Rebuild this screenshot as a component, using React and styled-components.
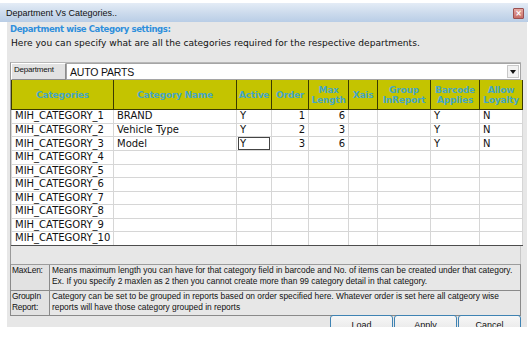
import React from 'react'
import styled, { createGlobalStyle } from 'styled-components'

const GlobalStyle = createGlobalStyle`
  html, body {
    margin: 0;
    padding: 0;
    background: #ffffff;
    overflow: hidden;
  }
  body {
    font-family: "Liberation Sans", Arial, sans-serif;
  }
`

const Window = styled.div`
  width: 528px;
  padding-top: 3px;
`

const TitleBar = styled.div`
  height: 19px;
  display: flex;
  align-items: center;
  justify-content: space-between;
  padding: 0 4px 0 6px;
  background: linear-gradient(to bottom, #e4ecf6 0%, #cbdaec 55%, #b9cde6 100%);
  font-size: 9px;
  color: #111;
`

const CloseBox = styled.div`
  width: 9px;
  height: 9px;
  margin-top: 1px;
  border: 1px solid #9a5050;
  border-radius: 1px;
  background: linear-gradient(to bottom, #e7a9a3, #c66d67);
  color: #fff;
  font-size: 8px;
  line-height: 9px;
  text-align: center;
  font-weight: bold;
  font-family: "DejaVu Sans", sans-serif;
`

const Body = styled.div`
  margin-left: 7px;
  width: 520px;
  box-sizing: border-box;
  padding: 1px 6px 0 3px;
  background: #e7e7e7;
  height: 305px;
  display: flex;
  flex-direction: column;
  & > * {
    flex-shrink: 0;
  }
`

const Heading = styled.div`
  font-family: "DejaVu Sans", Verdana, sans-serif;
  font-size: 8.5px;
  font-weight: bold;
  letter-spacing: -0.4px;
  line-height: 12px;
  color: #2f8fdc;
`

const Description = styled.div`
  font-family: "DejaVu Sans", Verdana, sans-serif;
  font-size: 9.1px;
  line-height: 12px;
  color: #111;
  margin-top: 2px;
  padding-left: 1px;
`

const GridFrame = styled.div`
  margin-top: 13px;
  height: 201px;
  border-left: 1px solid #9a9a9a;
  border-top: 1px solid #b8b8b8;
  display: flex;
  flex-direction: column;
`

const DeptRow = styled.div`
  display: flex;
  height: 17px;
`

const DeptLabel = styled.div`
  width: 55px;
  box-sizing: border-box;
  border: 1px solid #ffffff;
  border-right-color: #8c8c8c;
  border-bottom-color: #8c8c8c;
  background: #e2e2e2;
  font-size: 8px;
  letter-spacing: -0.2px;
  color: #111;
  padding: 1px 0 0 2px;
`

const Combo = styled.div`
  flex: 1;
  display: flex;
  align-items: center;
  justify-content: space-between;
  background: #fff;
  border: 1px solid #a5a5a5;
  padding-left: 3px;
  font-size: 10.5px;
  letter-spacing: -0.2px;
  color: #111;
`

const DropButton = styled.div`
  width: 10px;
  height: 11px;
  margin-right: 1px;
  display: flex;
  align-items: center;
  justify-content: center;
  background: #f2f2f2;
  border: 1px solid #c8c8c8;
`

const Table = styled.table`
  width: 511px;
  border-collapse: collapse;
  table-layout: fixed;
  font-family: "DejaVu Sans", Verdana, sans-serif;
  background: #fff;
`

const HeadCell = styled.th`
  height: 29px;
  padding: 0;
  background: #c4c400;
  border: 1px solid #3a3a00;
  border-top: none;
  color: #45a6c6;
  font-size: 9px;
  font-weight: bold;
  line-height: 10px;
  letter-spacing: -0.2px;
  text-align: center;
  white-space: nowrap;
`

const Cell = styled.td`
  height: 12.5px;
  padding: 0 3px;
  border: 1px solid #d6d6d6;
  border-top: none;
  font-size: 10px;
  line-height: 12px;
  color: #111;
  text-align: ${p => (p.$num ? 'right' : 'left')};
  white-space: nowrap;
  overflow: hidden;
  tr:last-child > & {
    border-bottom: 1px solid #4d4d4d;
  }
`

const EditBox = styled.div`
  margin: 0 -2px;
  padding: 0 1px;
  height: 11px;
  line-height: 11px;
  border: 1px solid #444;
  background: #fff;
`

const GridBlank = styled.div`
  flex: 1;
  border-right: 1px solid #c8c8c8;
`

const Notes = styled.div`
  display: grid;
  grid-template-columns: 39px 1fr;
  border: 1px solid #8a8a8a;
  border-top-color: #9c9c9c;
  font-size: 8.4px;
  line-height: 10.5px;
  color: #111;
`

const NoteLabel = styled.div`
  box-sizing: border-box;
  height: ${p => p.$h}px;
  padding: 0 0 0 1px;
  background: #e2e2e2;
  border-right: 1px solid #8a8a8a;
  border-bottom: ${p => (p.$last ? 'none' : '1px solid #8a8a8a')};
  letter-spacing: -0.2px;
`

const NoteText = styled.div`
  box-sizing: border-box;
  height: ${p => p.$h}px;
  padding: 0 0 0 2px;
  border-bottom: ${p => (p.$last ? 'none' : '1px solid #8a8a8a')};
  white-space: nowrap;
  overflow: hidden;
`

const ButtonRow = styled.div`
  display: flex;
  justify-content: flex-end;
  gap: 1px;
  margin-top: -1px;
`

const Button = styled.button`
  width: 63px;
  height: 24px;
  box-sizing: border-box;
  display: flex;
  align-items: center;
  justify-content: center;
  border: 1px solid #3f83b3;
  border-radius: 3px;
  background: linear-gradient(to bottom, #f7f7f7 0%, #ececec 50%, #dcdcdc 51%, #d2d2d2 100%);
  font-family: "Liberation Sans", Arial, sans-serif;
  font-size: 9px;
  line-height: 10px;
  color: #111;
  padding: 0 0 4px 0;
  u {
    text-decoration: underline;
  }
`

const columns = [
  { w: 102, label: 'Categories' },
  { w: 123, label: 'Category Name' },
  { w: 35, label: 'Active' },
  { w: 37, label: 'Order' },
  { w: 40, label: ['Max', 'Length'] },
  { w: 29, label: 'Xais' },
  { w: 53, label: ['Group', 'InReport'] },
  { w: 49, label: ['Barcode', 'Applies'] },
  { w: 43, label: ['Allow', 'Loyalty'] },
]

const data = [
  ['BRAND', 'Y', '1', '6', 'Y', 'N'],
  ['Vehicle Type', 'Y', '2', '3', 'Y', 'N'],
  ['Model', 'Y', '3', '6', 'Y', 'N'],
]

function Row({ index }) {
  const d = data[index - 1] || ['', '', '', '', '', '']
  return (
    <tr>
      <Cell>MIH_CATEGORY_{index}</Cell>
      <Cell>{d[0]}</Cell>
      <Cell>{index === 3 ? <EditBox>{d[1]}</EditBox> : d[1]}</Cell>
      <Cell $num>{d[2]}</Cell>
      <Cell $num>{d[3]}</Cell>
      <Cell />
      <Cell />
      <Cell>{d[4]}</Cell>
      <Cell>{d[5]}</Cell>
    </tr>
  )
}

function ButtonLabel({ text }) {
  return (
    <span>
      <u>{text[0]}</u>
      {text.slice(1)}
    </span>
  )
}

export default function App() {
  return (
    <Window>
      <GlobalStyle />
      <TitleBar>
        <span>Department Vs Categories..</span>
        <CloseBox>×</CloseBox>
      </TitleBar>
      <Body>
        <Heading>Department wise Category settings:</Heading>
        <Description>
          Here you can specify what are all the categories required for the respective departments.
        </Description>
        <GridFrame>
          <DeptRow>
            <DeptLabel>Department</DeptLabel>
            <Combo>
              AUTO PARTS
              <DropButton>
                <svg width="6" height="4" viewBox="0 0 6 4">
                  <path d="M0 0 L6 0 L3 4 Z" fill="#111" />
                </svg>
              </DropButton>
            </Combo>
          </DeptRow>
          <Table>
            <colgroup>
              {columns.map((c, i) => (
                <col key={i} style={{ width: c.w }} />
              ))}
            </colgroup>
            <thead>
              <tr>
                {columns.map((c, i) => (
                  <HeadCell key={i}>
                    {Array.isArray(c.label) ? (
                      <>
                        {c.label[0]}
                        <br />
                        {c.label[1]}
                      </>
                    ) : (
                      c.label
                    )}
                  </HeadCell>
                ))}
              </tr>
            </thead>
            <tbody>
              {Array.from({ length: 10 }, (_, i) => (
                <Row key={i} index={i + 1} />
              ))}
            </tbody>
          </Table>
          <GridBlank />
        </GridFrame>
        <Notes>
          <NoteLabel $h={26}>MaxLen:</NoteLabel>
          <NoteText $h={26}>
            Means maximum length you can have for that category field in barcode and No. of items can be created under that category.
            <br />
            Ex. If you specify 2 maxlen as 2 then you cannot create more than 99 category detail in that category.
          </NoteText>
          <NoteLabel $h={24} $last>
            GroupIn
            <br />
            Report:
          </NoteLabel>
          <NoteText $h={24} $last>
            Category can be set to be grouped in reports based on order specified here. Whatever order is set here all catgeory wise
            <br />
            reports will have those category grouped in reports
          </NoteText>
        </Notes>
        <ButtonRow>
          <Button>
            <ButtonLabel text="Load" />
          </Button>
          <Button>
            <ButtonLabel text="Apply" />
          </Button>
          <Button>
            <ButtonLabel text="Cancel" />
          </Button>
        </ButtonRow>
      </Body>
    </Window>
  )
}
